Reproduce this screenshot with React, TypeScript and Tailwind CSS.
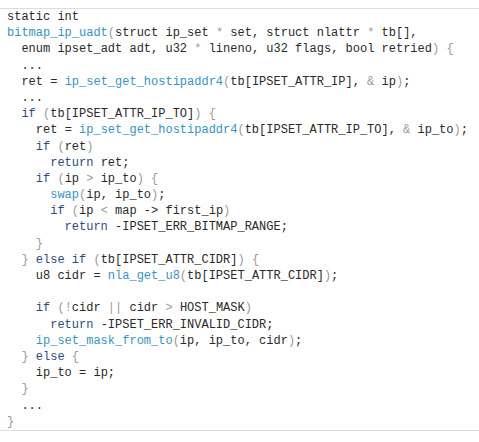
const code = `static int
bitmap_ip_uadt(struct ip_set * set, struct nlattr * tb[],
  enum ipset_adt adt, u32 * lineno, u32 flags, bool retried) {
  ...
  ret = ip_set_get_hostipaddr4(tb[IPSET_ATTR_IP], & ip);
  ...
  if (tb[IPSET_ATTR_IP_TO]) {
    ret = ip_set_get_hostipaddr4(tb[IPSET_ATTR_IP_TO], & ip_to);
    if (ret)
      return ret;
    if (ip > ip_to) {
      swap(ip, ip_to);
      if (ip < map -> first_ip)
        return -IPSET_ERR_BITMAP_RANGE;
    }
  } else if (tb[IPSET_ATTR_CIDR]) {
    u8 cidr = nla_get_u8(tb[IPSET_ATTR_CIDR]);

    if (!cidr || cidr > HOST_MASK)
      return -IPSET_ERR_INVALID_CIDR;
    ip_set_mask_from_to(ip, ip_to, cidr);
  } else {
    ip_to = ip;
  }
  ...
}`;

const keywords = new Set(["if", "else", "return"]);

function renderLine(line: string) {
  // split into words, spaces and single punctuation chars
  const tokens = line.match(/[A-Za-z_][A-Za-z0-9_]*|\s+|\.\.\.|->|./g) ?? [];
  return tokens.map((t, i) => {
    const next = tokens.slice(i + 1).find((x) => !/^\s+$/.test(x));
    if (keywords.has(t)) {
      return (
        <span key={i} className="text-[#2b4c7e]">
          {t}
        </span>
      );
    }
    if (/^[A-Za-z_]/.test(t) && tokens[i + 1] === "(") {
      return (
        <span key={i} className="text-[#3893bf]">
          {t}
        </span>
      );
    }
    if (/^[(){}*<>!|&]$/.test(t)) {
      return (
        <span key={i} className="text-[#9a9a9a]">
          {t}
        </span>
      );
    }
    void next;
    return <span key={i}>{t}</span>;
  });
}

export default function App() {
  const lines = code.split("\n");
  return (
    <div className="w-[479px] h-[442px] bg-white pt-2">
      <div className="border-y border-[#dcdcdc]">
        <pre className="px-[7px] font-['Liberation_Mono',monospace] text-[12px] leading-[16.2px] text-[#2a2a2a]">
          {lines.map((l, i) => (
            <div key={i} className="h-[16.2px]">
              {l.length ? renderLine(l) : " "}
            </div>
          ))}
        </pre>
      </div>
    </div>
  );
}
